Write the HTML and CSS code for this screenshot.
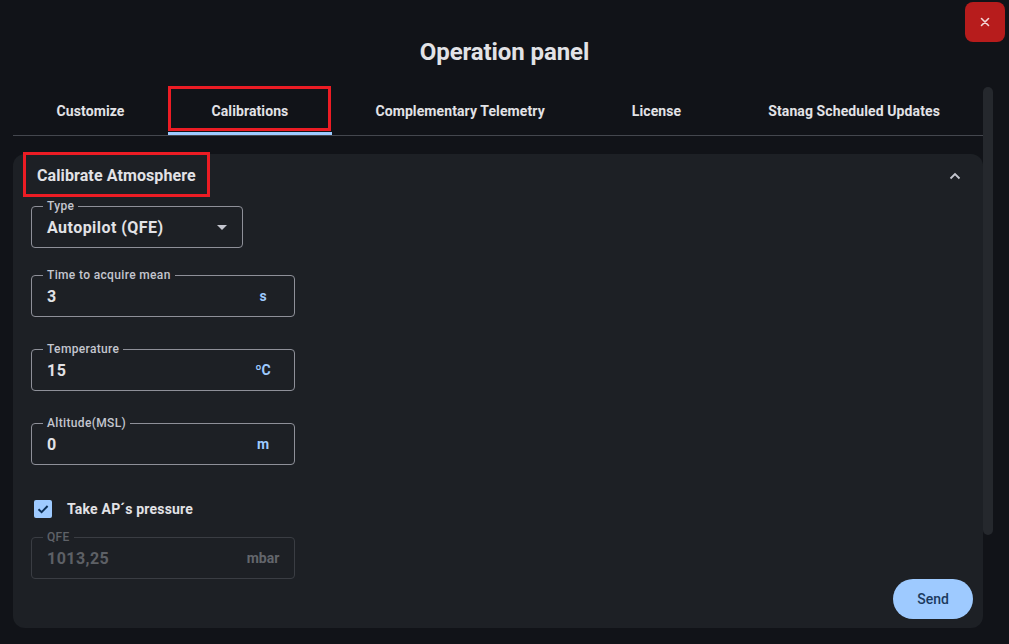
FILE: index.html
```html
<!DOCTYPE html>
<html lang="en">
<head>
<meta charset="utf-8">
<title>Operation panel</title>
<link rel="stylesheet" href="styles.css">
</head>
<body>
<div class="dialog">
  <header class="top">
    <h1 class="title">Operation panel</h1>
    <button class="close" aria-label="Close">
      <svg width="10" height="10" viewBox="0 0 10 10"><path d="M1.5 1.5 L8.5 8.5 M8.5 1.5 L1.5 8.5" stroke="#f3d6d6" stroke-width="1.6" stroke-linecap="round"/></svg>
    </button>
  </header>
  <div class="body">
    <div class="main">
      <nav class="tabs">
        <div class="tab">Customize</div>
        <div class="tab active marked">Calibrations</div>
        <div class="tab">Complementary Telemetry</div>
        <div class="tab">License</div>
        <div class="tab">Stanag Scheduled Updates</div>
      </nav>
      <section class="card">
        <div class="card-head">
          <span class="card-title marked-title">Calibrate Atmosphere</span>
          <svg class="chev" width="16" height="16" viewBox="0 0 16 16"><path d="M3.5 10.5 L8 6 L12.5 10.5" fill="none" stroke="#c4c6cf" stroke-width="1.8"/></svg>
        </div>
        <div class="fields">
          <div class="field select first">
            <span class="flabel">Type</span>
            <span class="value">Autopilot (QFE)</span>
            <svg class="caret" width="10" height="5" viewBox="0 0 10 5"><path d="M0 0 L10 0 L5 5 Z" fill="#c4c6cf"/></svg>
          </div>
          <div class="field gap27">
            <span class="flabel">Time to acquire mean</span>
            <span class="value">3</span>
            <span class="suffix">s</span>
          </div>
          <div class="field gap32">
            <span class="flabel">Temperature</span>
            <span class="value">15</span>
            <span class="suffix">ºC</span>
          </div>
          <div class="field gap32">
            <span class="flabel">Altitude(MSL)</span>
            <span class="value">0</span>
            <span class="suffix">m</span>
          </div>
          <label class="check-row">
            <span class="checkbox">
              <svg width="14" height="14" viewBox="0 0 14 14"><path d="M2.5 7.2 L5.6 10.2 L11.6 4" fill="none" stroke="#0b2f57" stroke-width="1.9"/></svg>
            </span>
            <span class="check-label">Take AP´s pressure</span>
          </label>
          <div class="field disabled">
            <span class="flabel">QFE</span>
            <span class="value">1013,25</span>
            <span class="suffix">mbar</span>
          </div>
        </div>
        <div class="footer">
          <button class="send">Send</button>
        </div>
      </section>
    </div>
    <div class="scroll-track"><div class="thumb"></div></div>
  </div>
</div>
</body>
</html>
```
FILE: styles.css
```css
* { box-sizing: border-box; }
html, body {
  margin: 0;
  padding: 0;
  background: #111318;
  height: 644px;
  overflow: hidden;
}
body {
  font-family: Roboto, "Noto Sans", "Liberation Sans", sans-serif;
  color: #e2e2e6;
}
.dialog {
  position: relative;
  width: 1009px;
  height: 644px;
}
.top {
  height: 87px;
  display: flex;
  justify-content: center;
}
.title {
  margin: 37px 0 0;
  font-size: 24px;
  line-height: 30px;
  font-weight: 700;
  color: #e2e2e6;
  letter-spacing: -0.1px;
}
.close {
  position: absolute;
  top: 2px;
  right: 4px;
  width: 40px;
  height: 40px;
  border: 0;
  border-radius: 8px;
  background: #b71c1c;
  display: flex;
  align-items: center;
  justify-content: center;
  padding: 0;
}
.body {
  display: flex;
  padding-left: 13px;
  padding-right: 16px;
}
.main {
  flex: 1;
  display: flex;
  flex-direction: column;
}
.scroll-track {
  width: 10px;
  flex: none;
}
.thumb {
  width: 10px;
  height: 448px;
  border-radius: 5px;
  background: #25282d;
}
.tabs {
  display: flex;
  height: 49px;
  border-bottom: 1px solid #44474e;
}
.tab {
  position: relative;
  flex: none;
  height: 48px;
  padding: 0 43.5px;
  display: flex;
  align-items: center;
  font-size: 14px;
  font-weight: 700;
  letter-spacing: 0.1px;
  color: #e2e2e6;
}
.tab.active {
  box-shadow: inset 0 -3px 0 #9ecaff;
}
.marked::after {
  content: "";
  position: absolute;
  left: 0;
  right: 1px;
  top: -1px;
  bottom: 4px;
  border: 3px solid #ec1c24;
  pointer-events: none;
}
.card {
  margin-top: 18px;
  background: #1d2025;
  border-radius: 12px;
  padding: 0 10px 9px 0;
}
.card-head {
  height: 44px;
  display: flex;
  align-items: center;
  justify-content: space-between;
  padding-left: 24px;
  padding-right: 10px;
}
.card-title {
  position: relative;
  font-size: 16px;
  line-height: 24px;
  font-weight: 700;
  letter-spacing: 0.1px;
  color: #e2e2e6;
}
.marked-title::after {
  content: "";
  position: absolute;
  left: -14px;
  right: -14px;
  top: -12px;
  bottom: -9px;
  border: 3px solid #ec1c24;
  pointer-events: none;
}
.fields {
  padding-left: 18px;
  display: flex;
  flex-direction: column;
  align-items: flex-start;
}
.field {
  position: relative;
  width: 264px;
  height: 42px;
  border: 1px solid #8e9099;
  border-radius: 4px;
  display: flex;
  align-items: center;
  padding-left: 15px;
}
.field.select {
  width: 212px;
  padding-right: 15px;
  justify-content: space-between;
}
.field.first { margin-top: 8px; }
.gap27 { margin-top: 27px; }
.gap32 { margin-top: 32px; }
.flabel {
  position: absolute;
  top: -8px;
  left: 11px;
  padding: 0 4px;
  background: #1d2025;
  font-size: 12px;
  line-height: 14px;
  font-weight: 500;
  letter-spacing: 0.35px;
  color: #c4c6cf;
}
.value {
  flex: 1;
  font-size: 16px;
  font-weight: 700;
  letter-spacing: 0.45px;
  color: #e2e2e6;
}
.select .value { flex: none; }
.suffix {
  width: 40px;
  margin-right: 11px;
  text-align: center;
  font-size: 14px;
  font-weight: 700;
  color: #9ecaff;
}
.check-row {
  margin-top: 32px;
  height: 24px;
  display: flex;
  align-items: center;
  padding-left: 3px;
}
.checkbox {
  width: 18px;
  height: 18px;
  border-radius: 2px;
  background: #9ecaff;
  display: flex;
  align-items: center;
  justify-content: center;
}
.check-label {
  margin-left: 15px;
  font-size: 14px;
  font-weight: 700;
  letter-spacing: 0.2px;
  color: #e2e2e6;
}
.field.disabled {
  margin-top: 16px;
  border-color: #3a3d43;
}
.disabled .flabel { color: #5f6268; }
.disabled .value { color: #5d6066; }
.disabled .suffix { color: #63666c; }
.footer {
  display: flex;
  justify-content: flex-end;
}
.send {
  width: 80px;
  height: 40px;
  border: 0;
  border-radius: 20px;
  background: #9ecaff;
  color: #1b3a5e;
  font-family: Roboto, "Noto Sans", sans-serif;
  font-size: 14px;
  font-weight: 500;
  padding: 0;
}
```
